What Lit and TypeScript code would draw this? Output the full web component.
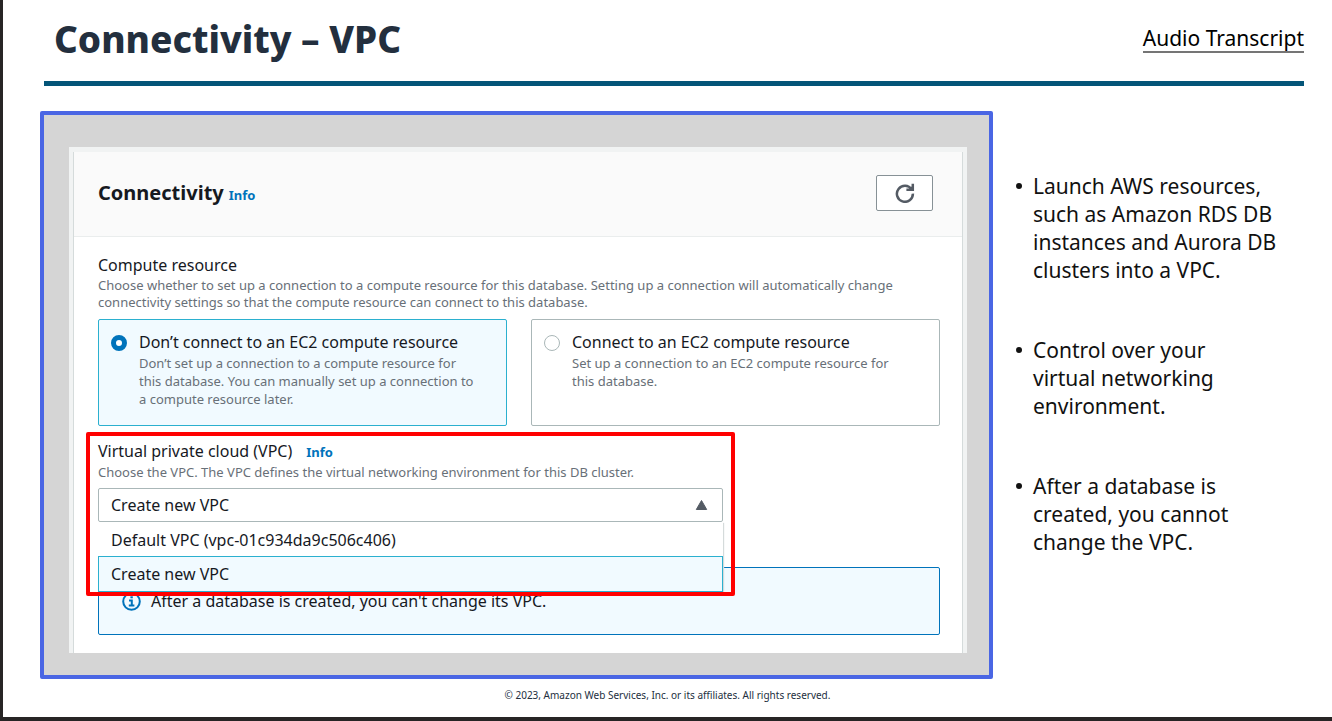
import { LitElement, html, css } from "lit";
import { customElement, state } from "lit/decorators.js";
import { classMap } from "lit/directives/class-map.js";

interface Choice {
  id: string;
  title: string;
  help: string;
}

const COMPUTE_CHOICES: Choice[] = [
  {
    id: "none",
    title: "Don’t connect to an EC2 compute resource",
    help: "Don’t set up a connection to a compute resource for this database. You can manually set up a connection to a compute resource later.",
  },
  {
    id: "ec2",
    title: "Connect to an EC2 compute resource",
    help: "Set up a connection to an EC2 compute resource for this database.",
  },
];

const VPCS = ["Default VPC (vpc-01c934da9c506c406)", "Create new VPC"];

const NOTES = [
  "Launch AWS resources, such as Amazon RDS DB instances and Aurora DB clusters into a VPC.",
  "Control over your\nvirtual networking environment.",
  "After a database is created, you cannot change the VPC.",
];

@customElement("connectivity-panel")
class ConnectivityPanel extends LitElement {
  @state() private compute = "none";
  @state() private vpc = VPCS[1];

  static styles = css`
    * {
      box-sizing: border-box;
    }
    :host {
      display: block;
      padding: 5px 4px 0 4px;
      background: #f1f3f3;
      color: #16191f;
      font-size: 16px;
      line-height: 20px;
    }
    .card {
      background: #fff;
      border: solid #d5dbdb;
      border-width: 0 1px;
    }
    .head {
      display: flex;
      align-items: center;
      justify-content: space-between;
      min-height: 85px;
      padding: 0 29px 3px 24px;
      background: #fafafa;
      border-bottom: 1px solid #eaeded;
    }
    .title {
      display: flex;
      align-items: baseline;
      gap: 5px;
    }
    h2 {
      margin: 0;
      font-size: 20px;
      line-height: 24px;
      font-weight: 700;
    }
    .info {
      color: #0073bb;
      font-size: 13px;
      font-weight: 700;
      text-decoration: none;
    }
    .refresh {
      display: flex;
      align-items: center;
      justify-content: center;
      width: 57px;
      height: 36px;
      padding: 0;
      background: #fff;
      border: 1px solid #879196;
      border-radius: 2px;
    }
    .body {
      padding: 18px 22px 18px 24px;
    }
    fieldset {
      min-width: 0;
      margin: 0;
      padding: 0;
      border: 0;
    }
    legend {
      padding: 0;
    }
    .help {
      margin: 2px 0 0;
      color: #687078;
      font-size: 13px;
      line-height: 17px;
    }
    .tiles {
      display: grid;
      grid-template-columns: 1fr 1fr;
      gap: 24px;
      margin-top: 8px;
    }
    .tile {
      display: flex;
      align-items: flex-start;
      gap: 12px;
      min-height: 107px;
      padding: 12px 27px 12px 12px;
      border: 1px solid #aab7b8;
      border-radius: 2px;
    }
    .tile.on {
      background: #f1faff;
      border-color: #2bb0cf;
    }
    .tile input {
      appearance: none;
      flex: none;
      width: 16px;
      height: 16px;
      margin: 3px 0 0;
      background: #fff;
      border: 1px solid #aab7b8;
      border-radius: 50%;
    }
    .tile input:checked {
      border: 5px solid #0073bb;
    }
    .tile label {
      display: block;
    }
    .tile .help {
      line-height: 18px;
    }
    .vpc {
      position: relative;
      max-width: 625px;
      margin-top: 15px;
    }
    .label {
      display: flex;
      align-items: baseline;
      gap: 14px;
    }
    .field {
      position: relative;
      margin-top: 7px;
    }
    select {
      appearance: none;
      display: block;
      width: 100%;
      height: 34px;
      padding: 0 12px;
      background: #fff;
      border: 1px solid #aab7b8;
      border-radius: 2px;
      color: inherit;
      font: inherit;
    }
    .caret {
      position: absolute;
      right: 15px;
      top: 11px;
    }
    .menu {
      position: absolute;
      z-index: 1;
      top: 100%;
      left: 0;
      right: 0;
      margin: 0;
      padding: 0;
      list-style: none;
      background: #fff;
      box-shadow: 1px 1px 1px #d5dbdb;
    }
    .menu li {
      padding: 8px 12px 6px;
      border: 1px solid transparent;
      border-width: 0 1px;
    }
    .menu li.on {
      padding: 7px 12px;
      background: #f1faff;
      border: 1px solid #2bb0cf;
    }
    .marker {
      position: absolute;
      z-index: 2;
      top: -9px;
      left: -12px;
      right: -12px;
      height: 164px;
      border: 4px solid #f00;
      border-radius: 2px;
      pointer-events: none;
    }
    .alert {
      display: flex;
      align-items: center;
      gap: 10px;
      min-height: 68px;
      margin-top: 45px;
      padding: 0 23px;
      background: #f1faff;
      border: 1px solid #0073bb;
      border-radius: 2px;
    }
    .alert svg {
      flex: none;
    }
    .alert p {
      margin: 0;
    }
  `;

  render() {
    return html`
      <section class="card">
        <header class="head">
          <div class="title">
            <h2>Connectivity</h2>
            <a class="info" href="#connectivity">Info</a>
          </div>
          <button class="refresh" type="button" aria-label="Refresh">
            <svg width="20" height="20" viewBox="0 0 20 20" fill="none" stroke="#545b64" stroke-width="2.5">
              <path d="M16.6 6.4A8 8 0 1 0 17.9 10.6"></path>
              <path d="M17.8 0.8V6.8H11.4"></path>
              <path d="M13.6 6L17.4 3V6Z" fill="#545b64" stroke="none"></path>
            </svg>
          </button>
        </header>
        <div class="body">
          <fieldset>
            <legend>Compute resource</legend>
            <p class="help">
              Choose whether to set up a connection to a compute resource for this database. Setting up a connection
              will automatically change connectivity settings so that the compute resource can connect to this database.
            </p>
            <div class="tiles">
              ${COMPUTE_CHOICES.map(
                (c) => html`
                  <div class=${classMap({ tile: true, on: c.id === this.compute })}>
                    <input
                      type="radio"
                      name="compute"
                      id=${c.id}
                      .checked=${c.id === this.compute}
                      @change=${() => (this.compute = c.id)}
                    />
                    <div>
                      <label for=${c.id}>${c.title}</label>
                      <p class="help">${c.help}</p>
                    </div>
                  </div>
                `
              )}
            </div>
          </fieldset>
          <div class="vpc">
            <div class="label">
              <label for="vpc">Virtual private cloud (VPC)</label>
              <a class="info" href="#vpc">Info</a>
            </div>
            <p class="help">Choose the VPC. The VPC defines the virtual networking environment for this DB cluster.</p>
            <div class="field">
              <select id="vpc" @change=${(e: Event) => (this.vpc = (e.target as HTMLSelectElement).value)}>
                ${VPCS.map((v) => html`<option ?selected=${v === this.vpc}>${v}</option>`)}
              </select>
              <svg class="caret" width="13" height="12" viewBox="0 0 13 12">
                <path d="M6.5 1.5L11.7 10.5H1.3Z" fill="#545b64" stroke="#545b64" stroke-linejoin="round"></path>
              </svg>
              <ul class="menu" role="listbox" aria-label="Virtual private cloud (VPC)">
                ${VPCS.map(
                  (v) => html`
                    <li
                      role="option"
                      aria-selected=${v === this.vpc}
                      class=${classMap({ on: v === this.vpc })}
                      @click=${() => (this.vpc = v)}
                    >${v}</li>
                  `
                )}
              </ul>
            </div>
            <div class="marker"></div>
          </div>
          <div class="alert">
            <svg width="19" height="19" viewBox="0 0 19 19" fill="none" stroke="#0073bb" stroke-width="2">
              <circle cx="9.5" cy="9.5" r="8.3"></circle>
              <path d="M7 8.6H9.8V13.2M6.8 13.4H12.4"></path>
              <path d="M8.4 5.3H10.8"></path>
            </svg>
            <p>After a database is created, you can't change its VPC.</p>
          </div>
        </div>
      </section>
    `;
  }
}

@customElement("app-root")
class AppRoot extends LitElement {
  static styles = css`
    * {
      box-sizing: border-box;
    }
    :host {
      display: flex;
      flex-direction: column;
      box-sizing: border-box;
      min-height: 100vh;
      background: #fff;
      border: solid #272525;
      border-width: 0 0 4px 3px;
      font-family: "Noto Sans", "Open Sans", sans-serif;
    }
    .top {
      display: flex;
      align-items: flex-start;
      justify-content: space-between;
      margin: 0 28px 0 41px;
      padding: 15px 0 18px 10px;
      border-bottom: 5px solid #045578;
    }
    h1 {
      margin: 0;
      color: #232f3e;
      font-size: 37px;
      line-height: 48px;
      font-weight: 800;
    }
    .transcript {
      margin-top: 10px;
      border-bottom: 2px solid #757575;
      color: #000;
      font-size: 21px;
      line-height: 26px;
      text-decoration: none;
    }
    .slide {
      display: grid;
      grid-template-columns: minmax(0, 1fr) 265px;
      gap: 20px;
      padding: 25px 54px 0 37px;
    }
    .frame {
      padding: 32px 22px 22px 25px;
      background: #d5d5d5;
      border: 4px solid #4a66e4;
      border-radius: 2px;
    }
    .notes {
      display: flex;
      flex-direction: column;
      gap: 52px;
      margin: 0;
      padding: 61px 0 0;
      list-style: none;
      color: #111;
      font-size: 21px;
      line-height: 28px;
      white-space: pre-line;
    }
    .notes li {
      display: grid;
      grid-template-columns: 20px 1fr;
    }
    .notes li::before {
      content: "";
      width: 6px;
      height: 6px;
      margin: 11px 0 0 3px;
      border-radius: 50%;
      background: #111;
    }
    footer {
      padding: 9px 0 15px;
      color: #232f3e;
      font-size: 10px;
      line-height: 14px;
      text-align: center;
    }
  `;

  render() {
    return html`
      <header class="top">
        <h1>Connectivity – VPC</h1>
        <a class="transcript" href="#transcript">Audio Transcript</a>
      </header>
      <main class="slide">
        <div class="frame"><connectivity-panel></connectivity-panel></div>
        <ul class="notes">${NOTES.map((n) => html`<li><span>${n}</span></li>`)}</ul>
      </main>
      <footer>© 2023, Amazon Web Services, Inc. or its affiliates. All rights reserved.</footer>
    `;
  }
}
